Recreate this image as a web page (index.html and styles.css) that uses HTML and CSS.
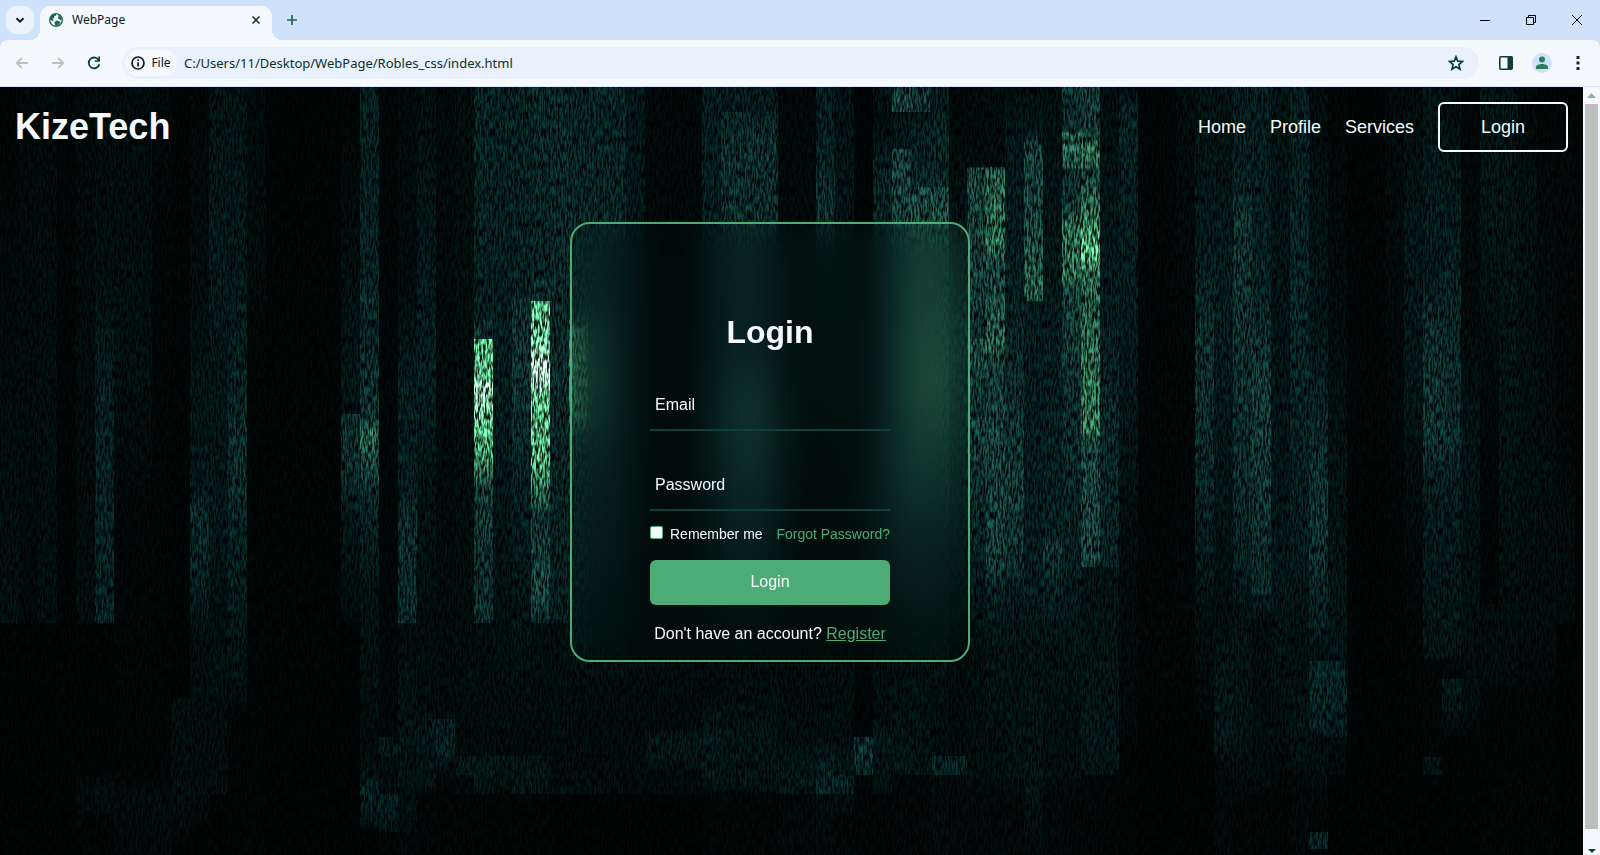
FILE: index.html
```html
<!DOCTYPE html>
<html lang="en">
<head>
<meta charset="utf-8">
<title>WebPage</title>
<link rel="stylesheet" href="styles.css">
</head>
<body>
<div class="tabstrip">
  <button class="tab-search" aria-label="Search tabs">
    <svg width="12" height="12" viewBox="0 0 12 12"><path d="M2.5 4.2 6 7.7l3.500-3.500" fill="none" stroke="#04201f" stroke-width="2"/></svg>
  </button>
  <div class="tab">
    <svg width="14" height="14" viewBox="0 0 14 14"><circle cx="7" cy="7" r="6.300" fill="#f5f8fc" stroke="#1c6a4c" stroke-width="1.300"/><path d="M1 6C1 3 4 .8 6.800 1L7.200 2.600 5.200 3.600 5 5.200 3.200 5.600 4.800 7 4 8 1.200 6.800ZM8.800 1.500l2.700 1.500 1.500 3.500-1.600.9L10.500 6 8.800 5.500 9.600 3.800ZM5.500 9.200l2-1.700 2.600.8 1.300 1.200-2.200 3-2.700.5-.8-2Z" fill="#1c6a4c"/></svg>
    <span class="tab-title">WebPage</span>
    <button class="tab-close" aria-label="Close tab">
      <svg width="10" height="10" viewBox="0 0 10 10"><path d="M1.500 1.500l7 7M8.500 1.500l-7 7" stroke="#0b2f2c" stroke-width="1.500"/></svg>
    </button>
  </div>
  <button class="tab-new" aria-label="New tab">
    <svg width="12" height="12" viewBox="0 0 12 12"><path d="M6 1v10M1 6h10" stroke="#1c6a4c" stroke-width="1.700"/></svg>
  </button>
  <div class="window-controls">
    <button aria-label="Minimize"><svg width="10" height="10" viewBox="0 0 10 10"><path d="M0 5.500h10" stroke="#000"/></svg></button>
    <button aria-label="Restore"><svg width="10" height="10" viewBox="0 0 10 10"><path d="M.5 2.500h7v7h-7ZM2.500 2.500v-2h7v7h-2" fill="none" stroke="#000"/></svg></button>
    <button aria-label="Close"><svg width="10" height="10" viewBox="0 0 10 10"><path d="M0 0l10 10M10 0L0 10" stroke="#000"/></svg></button>
  </div>
</div>

<div class="toolbar-back">
<div class="toolbar">
  <div class="history">
    <button aria-label="Back"><svg width="14" height="14" viewBox="0 0 14 14"><path d="M13 7H2M7 1.800 1.800 7 7 12.200" fill="none" stroke="#bcbfbb" stroke-width="1.800"/></svg></button>
    <button aria-label="Forward"><svg width="14" height="14" viewBox="0 0 14 14"><path d="M1 7h11M7 1.800 12.200 7 7 12.200" fill="none" stroke="#bcbfbb" stroke-width="1.800"/></svg></button>
    <button aria-label="Reload"><svg width="14" height="14" viewBox="0 0 14 14"><path d="M12 4.500A5.400 5.400 0 1 0 12.400 8.200" fill="none" stroke="#0b3f38" stroke-width="1.800"/><path d="M13 .5v5.300H7.800V4.200h3.500V.5Z" fill="#0b3f38"/></svg></button>
  </div>
  <div class="omnibox">
    <button class="chip">
      <svg width="14" height="14" viewBox="0 0 14 14"><circle cx="7" cy="7" r="6" fill="none" stroke="#04201f" stroke-width="1.700"/><path d="M6.200 6.200h1.700v4.300H6.200ZM6.200 3.300h1.700V5H6.200Z" fill="#04201f"/></svg>
      File
    </button>
    <input class="url" type="text" aria-label="Address" value="C:/Users/11/Desktop/WebPage/Robles_css/index.html">
    <button class="star" aria-label="Bookmark"><svg width="16" height="16" viewBox="0 0 16 16"><path d="M8 1.800l1.800 4.300 4.700.4-3.600 3.100 1.100 4.600L8 11.700l-4 2.500 1.100-4.600L1.500 6.500l4.700-.4Z" fill="none" stroke="#0b3f38" stroke-width="1.700"/></svg></button>
  </div>
  <div class="actions">
    <button aria-label="Side panel"><svg width="14" height="14" viewBox="0 0 14 14"><rect x=".8" y=".8" width="12.400" height="12.400" rx="1" fill="none" stroke="#0b3f38" stroke-width="1.600"/><path d="M8.500 1h4.500v12H8.500Z" fill="#0b3f38"/></svg></button>
    <button aria-label="Profile"><svg width="20" height="20" viewBox="0 0 20 20"><circle cx="10" cy="10" r="10" fill="#cfe2fb"/><circle cx="10" cy="6.500" r="3" fill="#2d7d59"/><path d="M4 16v-2c0-2 3.500-3 6-3s6 1 6 3v2Z" fill="#2d7d59"/></svg></button>
    <button class="menu" aria-label="Menu"><svg width="4" height="16" viewBox="0 0 4 16"><path d="M.5 1h3v3h-3ZM.5 6.500h3v3h-3ZM.5 12h3v3h-3Z" fill="#0b2f2c"/></svg></button>
  </div>
</div>
</div>

<div class="viewport">
  <div class="page">
    <svg class="forest" viewBox="0 0 1583 768" preserveAspectRatio="none" aria-hidden="true">
      <defs>
        <filter id="bark" x="0" y="0" width="100%" height="100%" color-interpolation-filters="sRGB">
          <feTurbulence type="fractalNoise" baseFrequency="0.55 0.12" numOctaves="2" seed="4" result="grain"/>
          <feColorMatrix in="grain" type="matrix" values="3 0 0 0 -1  3 0 0 0 -1  3 0 0 0 -1  0 0 0 0 1" result="streaks"/>
          <feComposite in="SourceGraphic" in2="streaks" operator="arithmetic" k1="1.3" k2="0.15" k3="0" k4="0"/>
        </filter>
      </defs>
      <g id="trees" filter="url(#bark)"></g>
    </svg>
    <header class="site-header">
      <h2 class="logo">KizeTech</h2>
      <nav class="nav">
        <a href="#">Home</a>
        <a href="#">Profile</a>
        <a href="#">Services</a>
        <button class="nav-login">Login</button>
      </nav>
    </header>
    <main class="main">
      <form class="card">
        <h1 class="card-title">Login</h1>
        <div class="fields">
          <div class="field"><input type="email" id="email"><label for="email">Email</label></div>
          <div class="field"><input type="password" id="password"><label for="password">Password</label></div>
        </div>
        <div class="options">
          <label class="remember"><input type="checkbox">Remember me</label>
          <a href="#">Forgot Password?</a>
        </div>
        <button class="submit" type="submit">Login</button>
        <p class="register">Don't have an account? <a href="#">Register</a></p>
      </form>
    </main>
  </div>
  <div class="scrollbar">
    <svg width="9" height="5" viewBox="0 0 9 5"><path d="M0 5 4.500 0 9 5Z" fill="#8ab89c"/></svg>
    <div class="thumb"></div>
    <svg width="8" height="4" viewBox="0 0 8 4"><path d="M0 0h8L4 4Z" fill="#0b3f38"/></svg>
  </div>
</div>
<script src="forest.js"></script>
</body>
</html>
```
FILE: styles.css
```css
* { box-sizing: border-box; margin: 0; padding: 0; }
body {
  display: flex;
  flex-direction: column;
  height: 100vh;
  overflow: hidden;
  font-family: "Liberation Sans", Arial, sans-serif;
  background: #000504;
}
button { border: 0; background: none; font: inherit; color: inherit; display: flex; align-items: center; justify-content: center; cursor: pointer; }
svg { display: block; flex: none; }

/* Browser frame */
.tabstrip {
  display: flex;
  align-items: center;
  height: 40px;
  flex: none;
  padding-left: 6px;
  background: #cfe2fb;
  font: 12px/16px "Noto Sans", "Open Sans", sans-serif;
  color: #04201f;
}
.tab-search { width: 28px; height: 28px; border-radius: 10px; background: #eaf2fc; }
.tab {
  position: relative;
  display: flex;
  align-items: center;
  align-self: flex-end;
  width: 232px;
  height: 34px;
  margin-left: 6px;
  padding: 0 10px 6px 9px;
  border-radius: 10px 10px 0 0;
  background: #f5f8fc;
}
.tab::before, .tab::after {
  content: "";
  position: absolute;
  bottom: 0;
  width: 10px;
  height: 10px;
}
.tab::before { right: 100%; background: radial-gradient(circle at 0 0, transparent 10px, #f5f8fc 10px); }
.tab::after { left: 100%; background: radial-gradient(circle at 100% 0, transparent 10px, #f5f8fc 10px); }
.tab-title { flex: 1; padding-left: 9px; }
.tab-close { width: 12px; height: 12px; }
.tab-new { width: 28px; height: 28px; margin-left: 6px; }
.window-controls { display: flex; margin-left: auto; }
.window-controls button { width: 46px; height: 40px; }
.toolbar-back { flex: none; background: #cfe2fb; }
.toolbar {
  display: flex;
  align-items: center;
  height: 47px;
  border-bottom: 1px solid #dbe8fa;
  border-radius: 8px 8px 0 0;
  background: #f5f8fc;
  font: 12px/16px "Noto Sans", "Open Sans", sans-serif;
  color: #04201f;
}
.history { display: flex; gap: 22px; padding: 0 21px 0 15px; }
.omnibox { display: flex; align-items: center; flex: 1; height: 32px; padding: 0 15px 0 3px; border-radius: 16px; background: #e9f1fc; }
.chip { gap: 6px; width: 52px; height: 26px; border-radius: 13px; background: #f5f8fc; }
.url { flex: 1; min-width: 0; margin-left: 7px; border: 0; outline: 0; background: none; font: 13px/20px "Noto Sans", "Open Sans", sans-serif; color: #0b2f2c; }
.actions { display: flex; align-items: center; gap: 19px; padding: 0 20px; }
.menu { margin-left: 5px; }

/* Page area */
.viewport { display: flex; flex: 1; min-height: 0; }
.page { position: relative; flex: 1; min-width: 0; overflow: hidden; color: #f5f8fc; }
.forest { position: absolute; inset: 0; width: 100%; height: 100%; }
.scrollbar { display: flex; flex-direction: column; align-items: center; width: 17px; padding: 6px 2px 2px; background: #f5f8fc; }
.thumb { flex: 1; width: 100%; margin: 6px 0 20px; background: #bcbfbb; }

.site-header { position: relative; display: flex; align-items: center; justify-content: space-between; padding: 15px; }
.logo { font-size: 36px; line-height: 40px; }
.nav { display: flex; align-items: center; gap: 24px; font-size: 18px; line-height: 20px; }
.nav a { color: inherit; text-decoration: none; }
.nav-login { width: 130px; height: 50px; border: 2px solid #f5f8fc; border-radius: 6px; }

.main { display: flex; justify-content: center; padding: 55px 43px 0 0; }
.card {
  display: flex;
  flex-direction: column;
  width: 400px;
  padding: 90px 78px 16px;
  border: 2px solid #4dab76;
  border-radius: 20px;
  backdrop-filter: blur(20px);
  font-size: 16px;
  line-height: 20px;
}
.card-title { font-size: 32px; line-height: 36px; text-align: center; }
.fields { display: grid; gap: 30px; margin-top: 31px; }
.field { position: relative; border-bottom: 2px solid #123f3b; }
.field input { display: block; width: 100%; height: 48px; border: 0; outline: 0; background: none; color: inherit; font: inherit; }
.field label { position: absolute; left: 5px; top: 14px; pointer-events: none; }
.options { display: flex; justify-content: space-between; margin-top: 13px; font-size: 14px; }
.remember { display: flex; gap: 7px; }
.remember input { appearance: none; width: 13px; height: 13px; margin-top: 2px; border: 1px solid #4dab76; border-radius: 2px; background: #f5f8fc; }
.options a, .register a { color: #4dab76; }
.options a { text-decoration: none; }
.submit { height: 45px; margin-top: 16px; padding-bottom: 2px; border-radius: 6px; background: #4dab76; }
.register { margin-top: 19px; text-align: center; white-space: nowrap; }
```
FILE: forest.js
```js
// Columns of the pixelated forest: [first column, last column, "y:level ..."].
// Levels run from 0 (black) to 9 (highlight); equal y values give a hard step.
const CELL = 18.97;
const PALETTE = [[0,6,5],[0,10,9],[1,16,14],[2,25,24],[4,36,35],[11,48,46],[23,72,63],[50,122,88],[92,195,136],[190,255,215]];
const COLUMNS = [
  [0,0,"0:0 200:1.2 420:2 536:2.2 536:0 768:0"],
  [1,1,"0:1 200:1.5 400:1.5 536:1 536:0"],
  [2,2,"0:1.2 300:2 536:2 536:0"],
  [3,3,"0:.6 250:.3 768:0"],
  [4,4,"0:1.3 300:1.6 536:1.8 536:0 690:0 690:1.3 726:1.3 726:.2"],
  [5,5,"0:1.5 200:2.2 310:3.8 440:4 536:4 536:0 690:0 690:1.5 726:1.5 726:.2"],
  [6,7,"0:1.5 280:2.2 370:1.3 440:.5 690:.3 707:1.5 740:1.2 768:1"],
  [8,8,"0:1.4 150:.5 690:.3 707:1.5 740:1.5 768:1.2"],
  [9,9,"0:0 200:.3 610:0 613:2 707:2 740:1.2 760:0"],
  [10,10,"0:.4 150:1.5 300:2.6 400:3 422:4.6 480:4.2 555:2 613:1.8 726:1.5 745:0"],
  [11,11,"0:2.6 200:3.3 250:2.8 450:3 536:2 575:2.2 594:2.2 613:1.8 707:1.8 707:0"],
  [12,12,"0:2.6 200:3.2 300:4 370:5 450:4 536:3 613:1.6 630:.3"],
  [13,13,"0:1.3 214:1.6 214:1 330:.3"],
  [14,17,"0:0 200:.3 500:.3 640:0"],
  [18,18,"0:.2 150:1.7 300:3 327:2 327:5 380:5 430:3 536:1.4 536:0"],
  [19,19,"0:3.7 200:4 214:5 233:4 300:5 335:5.5 345:6.7 375:6 410:4.5 500:2.5 650:1.5 680:2 707:4 735:2.5 745:0"],
  [20,20,"0:.5 500:.5 650:1 650:3 669:3 669:2 707:2 707:3.8 745:2.5 745:.6"],
  [21,21,"0:1.3 200:1.5 300:3.5 400:3.6 430:4.8 536:4.5 536:1.7 650:2.7 707:2.2 745:2 745:1"],
  [22,22,"0:2 150:3 290:3.8 400:2.5 536:1.8 632:1.8 632:3 700:2.5 707:.5"],
  [23,23,"0:1.2 536:1.5 632:1.5 632:3.5 669:4 669:3 688:1.4 707:.3"],
  [24,24,"0:2 200:2 600:1.8 669:1.2 669:3 688:3 688:1.3 707:1.3 707:.3"],
  [25,25,"0:4.3 200:3.8 233:3.5 233:5 252:5 252:8 290:8 300:9 320:8.3 350:8 390:6.600 400:5.600 480:5 536:5 536:1.8 669:1.5 669:3 707:2.5 707:.3"],
  [26,26,"0:4 300:3.5 536:2.2 669:1.5 669:3 707:1.6 707:.3"],
  [27,27,"0:4 210:4 214:5 310:5.200 390:4 536:2.5 650:1.4 669:1.4 669:2.8 707:2.5 707:.2"],
  [28,28,"0:4.5 190:4.2 195:5 214:5 214:8 260:8.300 275:9 295:8.800 310:8 370:7.800 410:6.500 430:5.200 500:6 520:5.500 536:4 536:2 669:1.4 669:2.7 707:2.5 707:.2"],
  [29,29,"0:4.5 250:4.500 280:5 330:4.5 536:3.5 536:2 640:2 669:1.5 707:2 707:.1"],
  [30,30,"0:4.2 80:4.200 140:4.5 230:5 240:6.800 330:6.800 350:5 536:3.5 600:1.6 669:1.5 707:1.8 707:0"],
  [31,32,"0:4.2 80:4.200 140:4.5 330:5 536:3 600:1.6 669:1.5 707:1.8 707:0"],
  [33,33,"0:3 140:3 400:2 580:1.7 640:1.5 707:1.5 707:0"],
  [34,36,"0:1 190:1 400:1.5 580:1.7 640:1.3 650:3 669:2.8 688:1.5 707:1.2 707:0"],
  [37,37,"0:3.5 200:3.6 500:2.5 600:1.2 650:3.2 700:2.5 707:.4"],
  [38,40,"0:3.4 25:3.4 25:4.2 60:5 250:4.7 330:5.8 450:4.5 560:2 610:2 650:2.5 700:2.5 707:.5"],
  [41,42,"0:1 400:1.4 550:1.5 650:2 688:3 707:2.5 707:1"],
  [43,43,"0:3.6 80:4 100:5 180:5 400:2 580:2 650:2 688:4 707:4 707:2 768:1"],
  [44,44,"0:2.6 300:2.5 580:2 650:2 688:3 688:4 707:4 707:2 726:2 726:.6 768:1"],
  [45,45,"0:.1 300:.5 580:.4 632:.2 650:.4 650:5 669:5 688:4 688:1 707:.5"],
  [46,46,"0:2.6 25:2.4 25:1.7 60:2.7 80:4 400:4.5 580:2 632:2 650:3 688:2.500 707:2 707:.5"],
  [47,47,"0:5 5:5.8 25:5.8 25:2.5 45:3 62:3 62:5.8 400:5.5 580:2 650:2.5 688:3 688:.8"],
  [48,48,"0:4.5 5:5.3 25:5.3 25:2.5 45:4 62:4 100:4.500 100:6 300:6.600 430:5 580:2.2 688:2.5 688:.8"],
  [49,49,"0:3.5 25:3.5 45:4.5 80:4 100:5 100:6 300:6.800 450:5 600:2 669:2 669:4 688:4 688:1.5 745:1.5"],
  [50,50,"0:1 60:1.5 130:2.500 250:5 480:3 560:1.5 669:1.5 669:4 688:4 688:1.5 720:1"],
  [51,51,"0:1.6 40:1.4 80:2 81:6 200:5.600 252:5 252:6.2 270:6 330:5 330:6 350:5.5 480:3.5 560:2 690:2 707:1"],
  [52,52,"0:1.6 80:2 80:6.200 100:6.600 155:6.800 180:5.800 260:6.500 275:5.600 340:5.800 480:5.600 500:4 560:2.5 690:2 707:1"],
  [53,53,"0:2 45:3 230:4 300:5 400:5.500 480:5 500:3.5 560:2.5 690:2.3 720:1"],
  [54,54,"0:2 45:3 60:5.800 130:5.800 200:6.500 214:6.300 214:3.5 500:3.5 560:2.5 690:2.5 745:2 768:1"],
  [55,55,"0:2 80:2.5 250:3.5 450:4 460:5.500 485:4.5 560:2.3 690:2 707:1"],
  [56,56,"0:5 45:5 46:6.500 80:6.300 82:4.800 120:5.5 140:6.800 190:6.800 200:6 300:5 450:4 560:2.5 650:2 688:2 707:.8"],
  [57,57,"0:5.300 45:5.5 60:6.800 80:6.500 82:5.500 130:7 165:8 190:6.800 220:6.400 270:6.800 345:7 350:6 480:5.800 480:2.500 560:2.6 650:3 688:2.5 688:.8"],
  [58,58,"0:2 150:3 350:4.5 480:4 480:2.500 650:2.8 688:2.5 688:.5"],
  [59,59,"0:2 25:4 150:3.7 300:3 500:1.5 640:1.2 660:.2"],
  [60,61,"0:.4 350:.6 600:.6 640:0"],
  [62,62,"0:2 120:1.3 280:.6 500:.8 640:0"],
  [63,63,"0:2.5 150:3.2 250:5 330:5 450:3.5 536:2 632:1 632:0"],
  [64,64,"0:2.5 60:2.5 200:3.6 400:2.8 520:2 600:3 650:3 690:1"],
  [65,65,"0:3.500 100:4 130:5.200 380:4.800 470:4 520:2.500 640:2.5 700:1.5 710:.5"],
  [66,66,"0:3.5 200:4 300:5.5 380:5.4 500:4.5 536:1.8 640:1.8 700:1.5 707:.4"],
  [67,67,"0:2.5 200:2.5 500:3 536:2.5 650:2 688:1 707:.2"],
  [68,68,"0:3.5 200:4.3 350:4 450:3.5 560:2 640:2.5 688:2 688:1 730:1"],
  [69,69,"0:1.6 250:3 380:5 450:5.2 540:3.5 574:2 574:4.3 640:4 650:2 688:2 707:1 745:.4 745:4 762:4 762:0"],
  [70,70,"0:.5 200:1.5 400:2.5 574:2.7 574:4 620:4 650:3 650:1.800 688:1.5 688:0"],
  [71,72,"0:0 300:.4 500:0"],
  [73,73,"0:1.5 200:1.4 400:.5 600:0"],
  [74,74,"0:1.5 150:3 300:3 380:2 500:.7 640:0"],
  [75,75,"0:2.5 150:3.5 175:3 250:5 350:5.2 400:3.5 570:2.5 574:.6 670:.4 670:2.500 688:2.5 688:0"],
  [76,76,"0:2 150:3.5 250:4.5 350:5 400:3.5 570:2.5 574:1 592:1 592:3 611:2.8 650:1 650:0"],
  [77,77,"0:.4 250:1.5 350:2.700 570:2 592:1 592:2.2 650:1 650:0"],
  [78,78,"0:2.7 150:2.7 300:1.2 400:.4 517:.2 517:1.600 574:1.6 592:1.6 611:.3"],
  [79,79,"0:2.7 200:2.7 400:2.4 517:2 555:1.8 592:1.5 611:.3"],
  [80,80,"0:.8 100:2.2 300:2.2 450:2 555:1.5 611:.6 650:.3 670:.2"],
  [81,81,"0:.2 200:1.5 400:2 555:1.500 611:.3"],
  [82,82,"0:.2 60:1 350:.8 440:1.8 536:1.3 536:0"],
  [83,83,"0:0 120:.8 260:.5 280:0"]
];

function shade(level) {
  const i = Math.min(Math.floor(level), 8), f = level - i;
  return "rgb(" + PALETTE[i].map((c, k) => Math.round(c + (PALETTE[i + 1][k] - c) * f)) + ")";
}

document.getElementById("trees").innerHTML = COLUMNS.map(([a, b, stops], n) => {
  const steps = stops.split(" ").map(s => s.split(":").map(Number))
    .map(([y, v]) => `<stop offset="${y / 768}" stop-color="${shade(v)}"/>`).join("");
  return `<linearGradient id="c${n}" x1="0" x2="0" y1="0" y2="1">${steps}</linearGradient>` +
    `<rect x="${Math.round(a * CELL)}" y="0" width="${Math.round((b + 1) * CELL) - Math.round(a * CELL)}" height="768" fill="url(#c${n})"/>`;
}).join("");
```
